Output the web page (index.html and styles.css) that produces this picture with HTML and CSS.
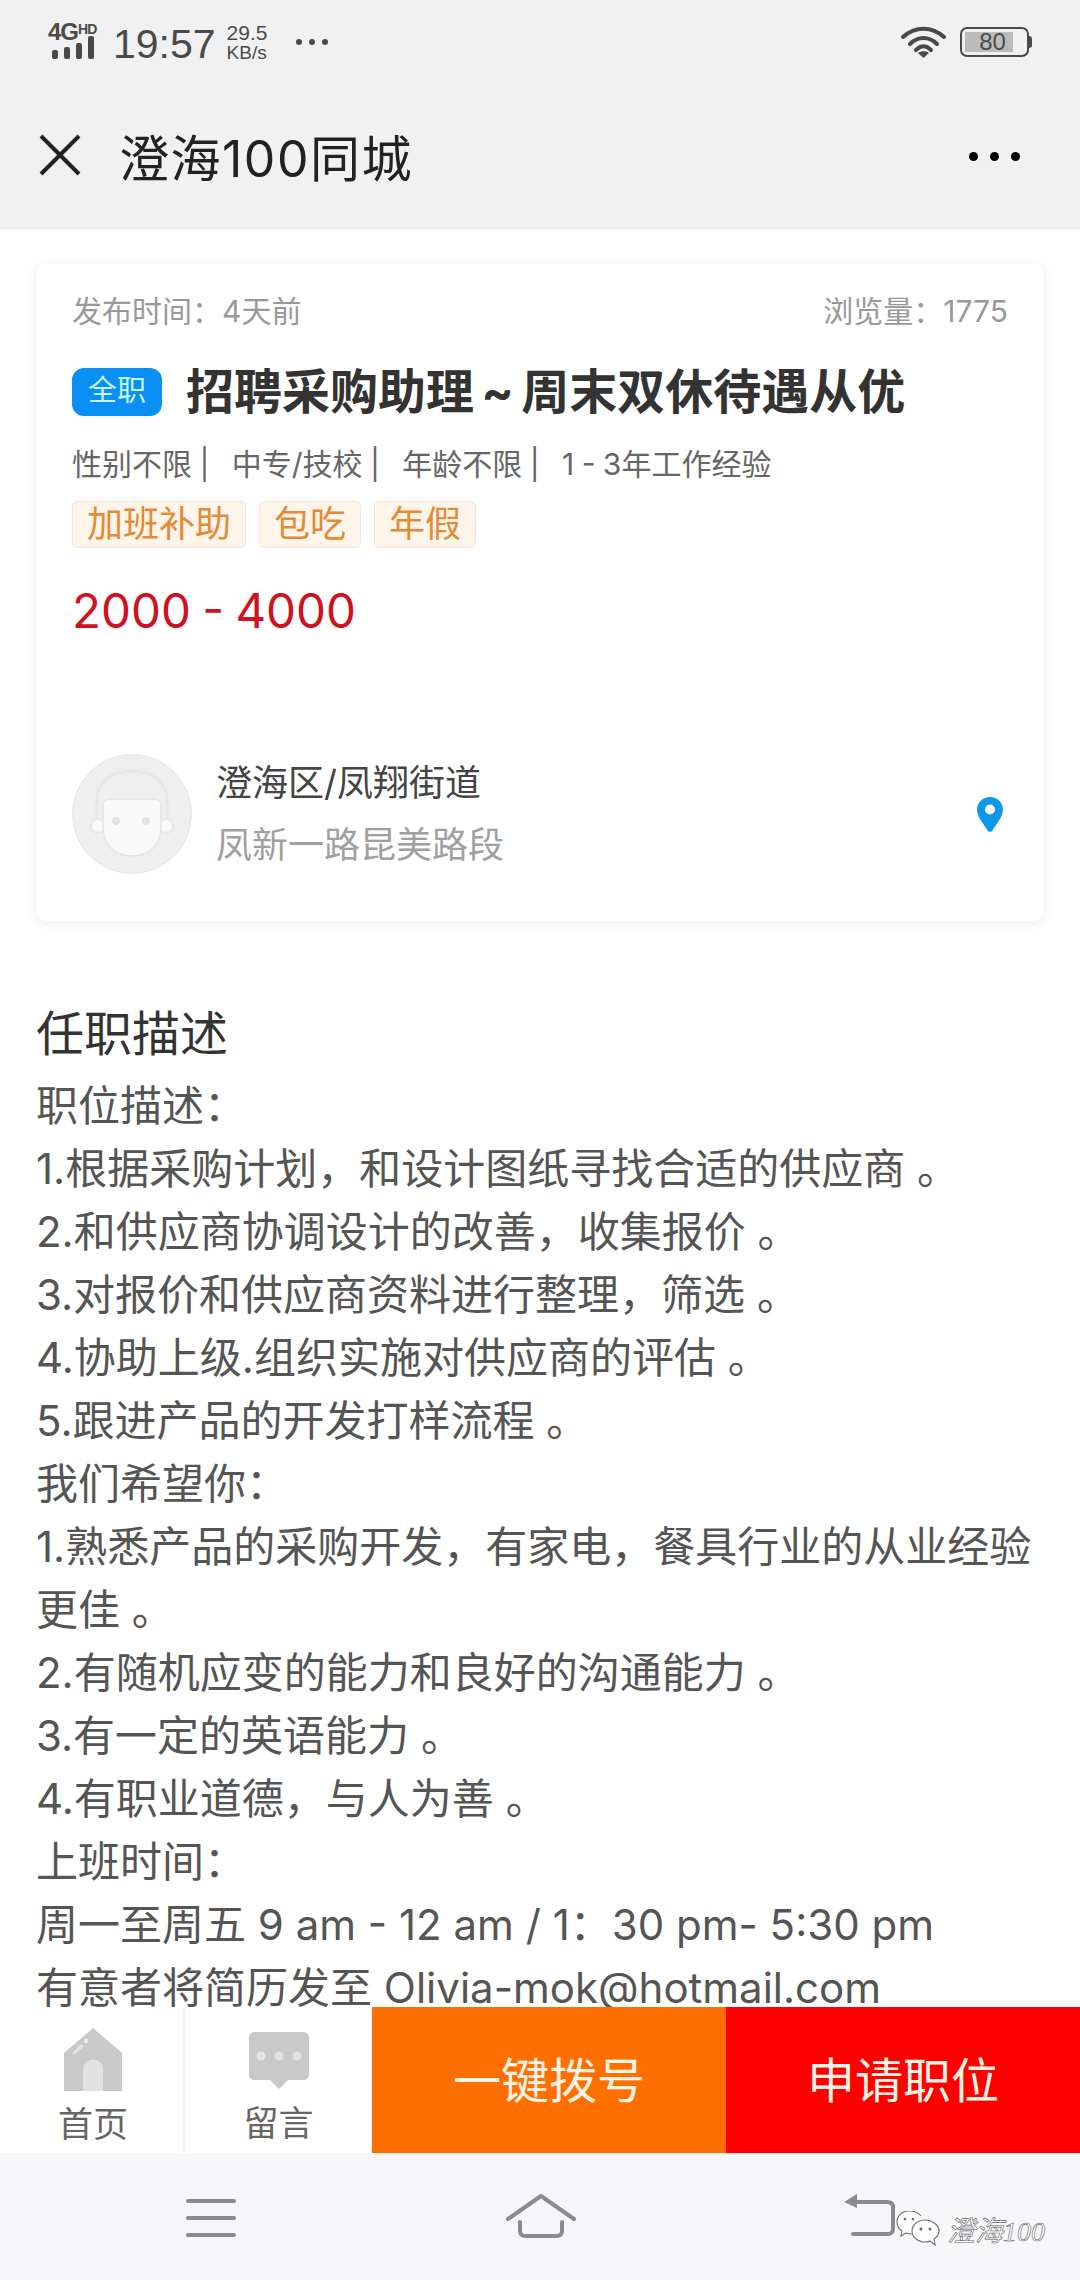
FILE: index.html
```html
<!DOCTYPE html>
<html lang="zh-CN">
<head>
  <meta charset="UTF-8" />
  <meta name="viewport" content="width=device-width, initial-scale=1.0" />
  <title>澄海100同城</title>
  <link rel="stylesheet" href="styles.css">
</head>
<body>

<div class="phone">
  <!-- status bar -->
  <div class="status">
    <div class="status-left">
      <div class="net">
        <div class="net-text"><span class="net-g">4G</span><span class="net-hd">HD</span></div>
        <div class="signal"><i class="s1"></i><i class="s2"></i><i class="s3"></i><i class="s4"></i></div>
      </div>
      <span class="clock">19:57</span>
      <div class="speed"><span>29.5</span><span class="speed-unit">KB/s</span></div>
      <div class="status-dots"><i></i><i></i><i></i></div>
    </div>
    <div class="status-right">
      <svg class="wifi" viewBox="0 0 45 32" width="45" height="32">
        <path d="M2 11 C14 0 31 0 43 11" fill="none" stroke="#4a4a4a" stroke-width="4" stroke-linecap="round"/>
        <path d="M9 18 C17 10 28 10 36 18" fill="none" stroke="#4a4a4a" stroke-width="4" stroke-linecap="round"/>
        <path d="M15 24 C20 19 25 19 30 24" fill="none" stroke="#4a4a4a" stroke-width="4" stroke-linecap="round"/>
        <path d="M17 27 C20 24.500 25 24.500 28 27 L22.500 32 Z" fill="#4a4a4a"/>
      </svg>
      <div class="battery">
        <div class="battery-body"><div class="battery-fill"></div><span class="battery-num">80</span></div>
        <div class="battery-tip"></div>
      </div>
    </div>
  </div>

  <!-- wechat header -->
  <div class="header">
    <svg class="close" viewBox="0 0 42 42" width="42" height="42">
      <path d="M2 2 L40 40 M40 2 L2 40" stroke="#222" stroke-width="4" fill="none"/>
    </svg>
    <div class="header-title">澄海100同城</div>
    <div class="header-more"><i></i><i></i><i></i></div>
  </div>

  <div class="main">
    <div class="card">
      <div class="card-top">
        <span>发布时间：4天前</span>
        <span>浏览量：1775</span>
      </div>
      <div class="job-title">
        <span class="job-type">全职</span>
        <h1>招聘采购助理 ~ 周末双休待遇从优</h1>
      </div>
      <div class="job-meta">性别不限 |&nbsp;&nbsp; 中专/技校 |&nbsp;&nbsp; 年龄不限 |&nbsp;&nbsp; 1 - 3年工作经验</div>
      <div class="perks">
        <span class="perk">加班补助</span>
        <span class="perk">包吃</span>
        <span class="perk">年假</span>
      </div>
      <div class="salary">2000 - 4000</div>
      <div class="place">
        <svg class="avatar" viewBox="0 0 120 120" width="120" height="120">
          <circle cx="60" cy="60" r="59.500" fill="#f0eff0" stroke="#e6e6e6"/>
          <path d="M25 68 V45 C25 28 40 17 60 17 C80 17 95 28 95 45 V68" fill="none" stroke="#e8e7e8" stroke-width="3"/>
          <circle cx="26" cy="72" r="7" fill="#fafafa" stroke="#e8e7e8" stroke-width="2"/>
          <circle cx="94" cy="72" r="7" fill="#fafafa" stroke="#e8e7e8" stroke-width="2"/>
          <path d="M31 52 C31 47 35 45 39 45 H81 C85 45 89 47 89 52 V74 C89 92 76 102 60 102 C44 102 31 92 31 74 Z" fill="#fafafa" stroke="#e8e7e8" stroke-width="2"/>
          <circle cx="44" cy="67" r="4" fill="#e4e3e4"/>
          <circle cx="74" cy="67" r="4" fill="#e4e3e4"/>
        </svg>
        <div class="place-text">
          <div class="place-area">澄海区/凤翔街道</div>
          <div class="place-road">凤新一路昆美路段</div>
        </div>
        <svg class="pin" viewBox="0 0 26 35" width="26" height="35">
          <path d="M13 0 C5.800 0 0 5.600 0 12.800 C0 20 8 29 10.500 33.500 C11.600 35.300 14.400 35.300 15.500 33.500 C18 29 26 20 26 12.800 C26 5.600 20.200 0 13 0 Z" fill="#0f97ea"/>
          <circle cx="13" cy="12.500" r="5" fill="#fff"/>
        </svg>
      </div>
    </div>

    <div class="desc">
      <h2>任职描述</h2>
      <p>职位描述：</p>
      <p>1.根据采购计划，和设计图纸寻找合适的供应商 。</p>
      <p>2.和供应商协调设计的改善，收集报价 。</p>
      <p>3.对报价和供应商资料进行整理，筛选 。</p>
      <p>4.协助上级.组织实施对供应商的评估 。</p>
      <p>5.跟进产品的开发打样流程 。</p>
      <p>我们希望你：</p>
      <p>1.熟悉产品的采购开发，有家电，餐具行业的从业经验更佳 。</p>
      <p>2.有随机应变的能力和良好的沟通能力 。</p>
      <p>3.有一定的英语能力 。</p>
      <p>4.有职业道德，与人为善 。</p>
      <p>上班时间：</p>
      <p>周一至周五 9 am - 12 am / 1：30 pm- 5:30 pm</p>
      <p>有意者将简历发至 Olivia-mok@hotmail.com</p>
    </div>
  </div>

  <!-- bottom action bar -->
  <div class="actions">
    <div class="action-tab tab-home">
      <svg viewBox="0 0 58 63" width="58" height="63">
        <path d="M29 0 L58 25 V63 H0 V25 Z" fill="#c9c9c9"/>
        <path d="M19 63 V42 C19 28 39 28 39 42 V63 Z" fill="#e2e2e2"/>
        <path d="M10 25 L18 18" stroke="#e2e2e2" stroke-width="3" stroke-linecap="round"/>
        <circle cx="22" cy="13" r="2.200" fill="#ececec"/>
      </svg>
      <span>首页</span>
    </div>
    <div class="action-tab tab-msg">
      <svg viewBox="0 0 60 58" width="60" height="58">
        <path d="M6 0 H54 C58 0 60 2 60 6 V42 C60 46 58 48 54 48 H39 L30 57 L21 48 H6 C2 48 0 46 0 42 V6 C0 2 2 0 6 0 Z" fill="#c9c9c9"/>
        <circle cx="12" cy="24" r="4.500" fill="#e2e2e2"/>
        <circle cx="30" cy="24" r="4.500" fill="#e2e2e2"/>
        <circle cx="48" cy="24" r="4.500" fill="#e2e2e2"/>
      </svg>
      <span>留言</span>
    </div>
    <div class="action-btn btn-call">一键拨号</div>
    <div class="action-btn btn-apply">申请职位</div>
  </div>

  <!-- android nav -->
  <div class="navbar">
    <div class="nav-menu"><i></i><i></i><i></i></div>
    <svg class="nav-home" viewBox="0 0 70 44" width="70" height="44">
      <path d="M2 25 L35 2 L68 25" fill="none" stroke="#8b8b8d" stroke-width="4" stroke-linecap="round" stroke-linejoin="round"/>
      <path d="M14 28 V37 C14 40 16 42 19 42 H51 C54 42 56 40 56 37 V28" fill="none" stroke="#8b8b8d" stroke-width="4" stroke-linecap="round"/>
    </svg>
    <svg class="nav-back" viewBox="0 0 52 42" width="52" height="42">
      <path d="M1 8 L14 0 V14 Z" fill="#8b8b8d"/>
      <path d="M12 8 H44 C48 8 50 10 50 13 V35 C50 38 48 40 45 40 H10" fill="none" stroke="#8b8b8d" stroke-width="4" stroke-linecap="round"/>
    </svg>
  </div>

  <!-- watermark sits on top of the nav bar -->
  <div class="watermark">
    <svg viewBox="0 0 44 36" width="44" height="36">
      <path d="M25 5 C22 1 17 0 13 0 C6 0 1 5 1 11 C1 15 3 18 6 20 L5 25 L10 22 C12 23 14 23 16 23" fill="#fff" stroke="#777" stroke-width="1.200"/>
      <path d="M29 9 C22 9 16 14 16 20 C16 26 22 31 29 31 C31 31 33 31 34 30 L39 34 L38 28 C41 26 43 23 43 20 C43 14 36 9 29 9 Z" fill="#fff" stroke="#777" stroke-width="1.200"/>
      <circle cx="25" cy="18" r="1.500" fill="#666"/>
      <circle cx="34" cy="18" r="1.500" fill="#666"/>
      <circle cx="9" cy="8" r="1.300" fill="#666"/>
      <circle cx="17" cy="8" r="1.300" fill="#666"/>
    </svg>
    <span>澄海100</span>
  </div>
</div>

</body>
</html>
```

FILE: styles.css
```css
* { box-sizing: border-box; }
body {
  margin: 0; padding: 0;
  font-family: Inter, "Noto Sans CJK SC", sans-serif;
  background: white;
}
i { display: block; }
.phone {
  position: relative;
  width: 1080px; height: 2280px;
  display: flex; flex-direction: column;
  overflow: hidden;
}

/* status bar */
.status {
  height: 84px; flex: none;
  background: #f1f1f1;
  display: flex; justify-content: space-between; align-items: flex-start;
  padding: 22px 48px 0 48px;
  color: #4a4a4a;
  font-family: "Liberation Sans", sans-serif;
}
.status-left { display: flex; align-items: flex-start; }
.net { width: 54px; }
.net-text { display: flex; align-items: flex-start; height: 14px; line-height: 20px; font-weight: bold; }
.net-g { font-size: 24px; letter-spacing: -1px; }
.net-hd { font-size: 14px; line-height: 14px; letter-spacing: -1px; }
.signal { display: flex; align-items: flex-end; gap: 6px; height: 23px; margin-left: 4px; }
.signal i { width: 6px; background: #4a4a4a; border-radius: 2px; }
.s1 { height: 9px; }
.s2 { height: 12px; }
.s3 { height: 16px; }
.s4 { height: 23px; }
.clock { font-size: 41px; line-height: 42px; margin: 1px 0 0 11px; }
.speed { display: flex; flex-direction: column; margin: 1px 0 0 11px; font-size: 21px; line-height: 20px; }
.speed-unit { font-size: 19px; }
.status-dots { display: flex; gap: 7px; margin: 17px 0 0 29px; }
.status-dots i { width: 6px; height: 6px; border-radius: 50%; background: #4a4a4a; }
.status-right { display: flex; align-items: flex-start; gap: 14px; margin-top: 4px; }
.battery { display: flex; align-items: center; margin-top: 1px; }
.battery-body {
  position: relative; width: 69px; height: 30px;
  border: 2px solid #4a4a4a; border-radius: 7px;
  padding: 3px;
}
.battery-fill { width: 48px; height: 20px; background: #bbb; }
.battery-num {
  position: absolute; left: 3px; top: 0; width: 55px;
  text-align: center; font-size: 24px; line-height: 26px; color: #4a4a4a;
}
.battery-tip { width: 3px; height: 12px; background: #4a4a4a; border-radius: 0 3px 3px 0; }

/* header */
.header {
  height: 145px; flex: none;
  background: #f1f1f1;
  border-bottom: 1px solid #e4e4e4;
  display: flex; align-items: center;
  padding: 0 60px 2px 39px;
}
.close { flex: none; }
.header-title { flex: 1; margin-left: 38px; font-size: 50px; letter-spacing: 1.5px; color: #222; }
.header-more { display: flex; gap: 12px; margin-top: 3px; }
.header-more i { width: 9px; height: 9px; border-radius: 50%; background: #000; }

/* main */
.main { flex: 1; min-height: 0; overflow: hidden; padding: 35px 36px 0; background: white; }
.card {
  background: white; border-radius: 10px;
  box-shadow: 0 2px 14px rgba(0,0,0,0.08);
  padding: 27px 36px 47px;
}
.card-top {
  display: flex; justify-content: space-between;
  font-size: 30px; line-height: 40px; color: #999;
}
.job-title { display: flex; align-items: center; margin-top: 37px; height: 48px; }
.job-type {
  width: 90px; height: 48px; line-height: 46px;
  background: #0a8ff5; color: #c8f6ff;
  border-radius: 12px; text-align: center; font-size: 29px;
}
.job-title h1 { margin: 0 0 0 24px; font-size: 48px; line-height: 48px; font-weight: bold; color: #333; white-space: nowrap; word-spacing: -4px; }
.job-meta { margin-top: 28px; font-size: 30px; line-height: 40px; color: #666; white-space: nowrap; word-spacing: -1px; }
.perks { display: flex; gap: 13px; margin-top: 17px; }
.perk {
  height: 47px; line-height: 44px; padding: 0 14px;
  background: #fdf4ea; border: 1px solid #f7e6d6; border-radius: 5px;
  font-size: 36px; color: #e58a35;
}
.salary { margin-top: 33px; font-size: 47.5px; line-height: 60px; color: #cf1120; word-spacing: -2px; }
.place { display: flex; align-items: center; margin-top: 113px; }
.avatar { flex: none; }
.place-text { flex: 1; margin: -2px 0 -2px 24px; font-size: 36px; line-height: 62px; }
.place-area { color: #444; }
.place-road { color: #a0a0a0; }
.pin { flex: none; margin: 0 5px 0 0; }

/* description */
.desc { margin-top: 81px; color: #555; font-size: 42px; line-height: 63px; }
.desc h2 { margin: 0 0 9px; font-size: 48px; line-height: 63px; font-weight: normal; color: #333; }
.desc p { margin: 0; }

/* bottom actions */
.actions { height: 146px; flex: none; display: flex; background: white; }
.action-tab {
  display: flex; flex-direction: column; align-items: center;
  padding-top: 21px;
  font-size: 35px; color: #666;
}
.action-tab span { line-height: 40px; margin-top: 13px; }
.tab-home { width: 185px; padding-left: 3px; border-right: 2px solid #f3f3f3; }
.tab-msg { width: 187px; padding-top: 25px; }
.tab-msg span { margin-top: 13px; }
.action-btn {
  display: flex; align-items: center; justify-content: center;
  color: #fff3e6; font-size: 48px; padding-bottom: 6px;
}
.btn-call { width: 354px; background: #ff6f00; }
.btn-apply { flex: 1; background: #fe0000; }

/* nav bar */
.navbar {
  height: 127px; flex: none;
  background: #f7f7f9;
  display: flex; align-items: flex-start;
  padding-top: 41px;
}
.nav-menu { margin-left: 186px; display: flex; flex-direction: column; gap: 13px; padding-top: 5px; }
.nav-menu i { width: 50px; height: 4px; background: #8b8b8d; border-radius: 2px; }
.nav-home { margin-left: 270px; }
.nav-back { margin-left: 267px; }
.watermark {
  position: absolute; left: 896px; top: 2209px;
  display: flex; align-items: center; gap: 7px;
}
.watermark span {
  font-size: 28px; font-style: italic; color: #fff;
  -webkit-text-stroke: 0.6px #666;
  font-family: "Liberation Serif", "Noto Sans CJK SC", serif;
}
```
